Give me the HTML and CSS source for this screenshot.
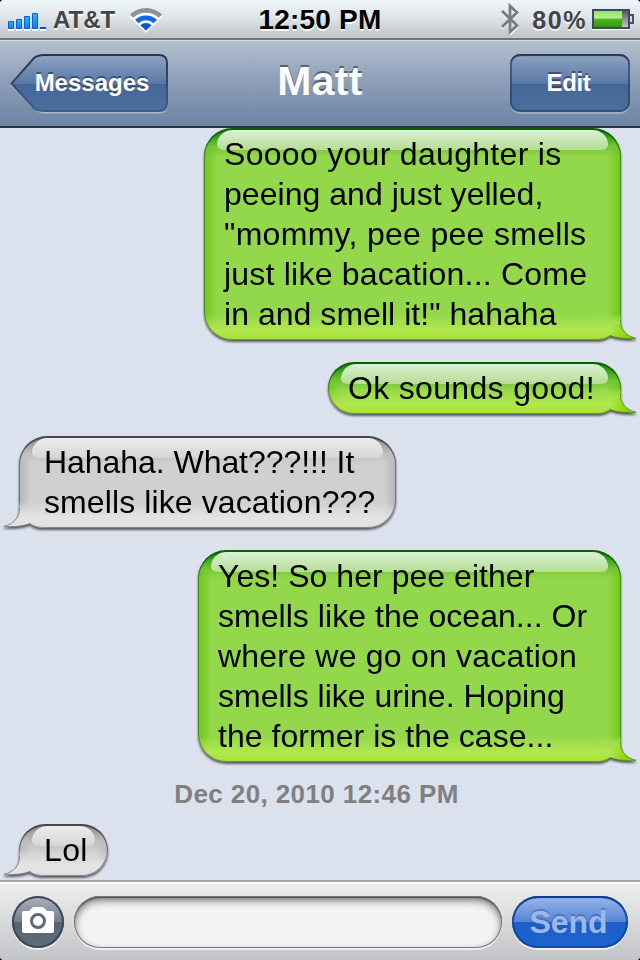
FILE: index.html
```html
<!DOCTYPE html>
<html lang="en">
<head>
    <meta charset="UTF-8">
    <meta name="viewport" content="width=device-width, initial-scale=1.0">
    <title>Messages</title>
    <link rel="stylesheet" href="styles.css">
</head>
<body>
    <div class="phone">

        <!-- Status Bar -->
        <div class="status-bar">
            <div class="status-left">
                <svg class="signal" width="39" height="20" viewBox="0 0 39 20">
                    <defs>
                        <linearGradient id="bar" x1="0" y1="0" x2="0" y2="1">
                            <stop offset="0" stop-color="#2fb4fb"/>
                            <stop offset="1" stop-color="#0b7ff0"/>
                        </linearGradient>
                    </defs>
                    <path d="M0 17h6v2H0zM8 17h6v2H8zM16 17h6v2h-6zM24 17h6v2h-6zM32 17h6v2h-6z" fill="#fff"/>
                    <g fill="url(#bar)" stroke="#0a5fd4" stroke-width="1">
                        <path d="M.5 9.500h5v7h-5z"/>
                        <path d="M8.500 7.500h5v9h-5z"/>
                        <path d="M16.500 4.500h5v12h-5z"/>
                        <path d="M24.500 1.500h5v15h-5z"/>
                    </g>
                    <path d="M32 15h6v2h-6z" fill="#0a4fc4"/>
                </svg>
                <span class="carrier">AT&amp;T</span>
                <svg class="wifi" width="34" height="27" viewBox="0 0 34 27">
                    <path d="M1 10A23 23 0 0 1 33 10L17 26z" fill="#fff"/>
                    <path d="M1 7.500A23 23 0 0 1 33 7.500L30 10.800A19 19 0 0 0 4 10.800z" fill="#929292"/>
                    <path d="M6 12.800A16 16 0 0 1 28 12.800L24.600 16.200A11.500 11.500 0 0 0 9.400 16.200z" fill="#1269e4"/>
                    <path d="M17 23.500l-5.600-5.300a8 8 0 0 1 11.200 0z" fill="#0c55d0"/>
                </svg>
            </div>
            <span class="clock">12:50 PM</span>
            <div class="status-right">
                <svg class="bluetooth" width="18" height="32" viewBox="0 0 18 32">
                    <path d="M1 8L16 22.500L9 30V2L16 9.500L1 24" fill="none" stroke="#fff" stroke-width="2.500" transform="translate(0 1.300)"/>
                    <path d="M1 8L16 22.500L9 29V3L16 9.500L1 24" fill="none" stroke="#7b7d7e" stroke-width="2.800"/>
                </svg>
                <span class="percent">80%</span>
                <svg class="battery" width="42" height="22" viewBox="0 0 42 22">
                    <defs>
                        <linearGradient id="charge" x1="0" y1="0" x2="0" y2="1">
                            <stop offset="0" stop-color="#8fe35e"/>
                            <stop offset=".4" stop-color="#b2f58c"/>
                            <stop offset=".55" stop-color="#43b51c"/>
                            <stop offset="1" stop-color="#37950f"/>
                        </linearGradient>
                        <linearGradient id="empty" x1="0" y1="0" x2="0" y2="1">
                            <stop offset="0" stop-color="#555"/>
                            <stop offset="1" stop-color="#c8c8c8"/>
                        </linearGradient>
                    </defs>
                    <path d="M0 19h38v2H0z" fill="#fff"/>
                    <path d="M37 6h4v8h-4" fill="#d5d8de" stroke="#4b506b" stroke-width="2"/>
                    <path d="M1 1h36v18H1z" fill="url(#empty)" stroke="#42465f" stroke-width="2"/>
                    <path d="M2 2h28v16H2z" fill="url(#charge)"/>
                </svg>
            </div>
        </div>

        <!-- Navigation Bar -->
        <div class="nav-bar">
            <button class="back-btn">
                <svg class="back-shape" width="160" height="60" viewBox="0 0 160 60">
                    <defs>
                        <linearGradient id="navBtn" x1="0" y1="0" x2="0" y2="1">
                            <stop offset="0" stop-color="#8da4c3"/>
                            <stop offset=".51" stop-color="#5978a6"/>
                            <stop offset=".51" stop-color="#456898"/>
                            <stop offset="1" stop-color="#4c6e9e"/>
                        </linearGradient>
                        <linearGradient id="navEdge" x1="0" y1="0" x2="0" y2="1">
                            <stop offset="0" stop-color="#2c3748"/>
                            <stop offset="1" stop-color="#3f5c8a"/>
                        </linearGradient>
                    </defs>
                    <path d="M34 1H149Q157 1 157 9V49Q157 57 149 57H34Q28 57 24 52L1.500 29.500L24 6Q28 1 34 1z" fill="none" stroke="#a9b7ca" stroke-width="2" transform="translate(0 1.500)"/>
                    <path d="M34 1H149Q157 1 157 9V49Q157 57 149 57H34Q28 57 24 54L1.500 29.500L24 4Q28 1 34 1z" fill="url(#navBtn)" stroke="url(#navEdge)" stroke-width="2"/>
                </svg>
                <span class="back-text">Messages</span>
            </button>
            <h1 class="title">Matt</h1>
            <button class="edit-btn">Edit</button>
        </div>

        <!-- Messages -->
        <div class="messages">
            <div class="bubble sent sent-1">
                <p>
                    <span class="l1">Soooo your daughter is</span>
                    <span class="l2">peeing and just yelled,</span>
                    <span class="l3">"mommy, pee pee smells</span>
                    <span class="l4">just like bacation... Come</span>
                    <span class="l5">in and smell it!" hahaha</span>
                </p>
                <svg class="tail" width="42" height="28" viewBox="0 0 42 28">
                    <defs>
                        <linearGradient id="greenTail" gradientUnits="userSpaceOnUse" x1="0" y1="0" x2="0" y2="28">
                            <stop offset=".05" stop-color="#95d94a" stop-opacity="0"/>
                            <stop offset=".4" stop-color="#a4e14c"/>
                            <stop offset=".64" stop-color="#b0e84e"/>
                            <stop offset="1" stop-color="#a8e236"/>
                        </linearGradient>
                        <linearGradient id="greenTip" gradientUnits="userSpaceOnUse" x1="16" y1="20" x2="34" y2="24">
                            <stop offset="0" stop-color="#7fd000" stop-opacity="0"/>
                            <stop offset="1" stop-color="#7fd000" stop-opacity=".9"/>
                        </linearGradient>
                    </defs>
                    <path d="M0 0H27V8C26 17 32 24 42 26.500C33 27 24 26.500 16 23.500C12 27 8 28 0 28z" fill="url(#greenTail)"/>
                    <path d="M16 12H27C27 17 32 24 42 26.500C33 27 24 26.500 16 23.500z" fill="url(#greenTip)"/>
                    <path d="M26.500 8C26 17 32 24 42 26.300C33 27 24 26.500 16 23.500C12 26.500 8 27.500 0 27.500" fill="none" stroke="#4d7a16" stroke-opacity=".7"/>
                </svg>
            </div>

            <div class="bubble sent sent-2">
                <p><span class="l6">Ok sounds good!</span></p>
                <svg class="tail" width="42" height="28" viewBox="0 0 42 28">
                    <path d="M0 0H27V8C26 17 32 24 42 26.500C33 27 24 26.500 16 23.500C12 27 8 28 0 28z" fill="url(#greenTail)"/>
                    <path d="M16 12H27C27 17 32 24 42 26.500C33 27 24 26.500 16 23.500z" fill="url(#greenTip)"/>
                    <path d="M26.500 8C26 17 32 24 42 26.300C33 27 24 26.500 16 23.500C12 26.500 8 27.500 0 27.500" fill="none" stroke="#4d7a16" stroke-opacity=".7"/>
                </svg>
            </div>

            <div class="bubble received received-1">
                <p>
                    <span class="l7">Hahaha. What???!!! It</span>
                    <span class="l8">smells like vacation???</span>
                </p>
                <svg class="tail" width="42" height="28" viewBox="0 0 42 28">
                    <defs>
                        <linearGradient id="grayTail" gradientUnits="userSpaceOnUse" x1="0" y1="0" x2="0" y2="28">
                            <stop offset=".05" stop-color="#d1d1d1" stop-opacity="0"/>
                            <stop offset=".4" stop-color="#dbdbdb"/>
                            <stop offset=".64" stop-color="#e4e4e4"/>
                            <stop offset="1" stop-color="#e0e0e0"/>
                        </linearGradient>
                    </defs>
                    <path d="M42 0H15V8C16 17 10 24 0 26.500C9 27 18 26.500 26 23.500C30 27 34 28 42 28z" fill="url(#grayTail)"/>
                    <path d="M15.500 8C16 17 10 24 0 26.300C9 27 18 26.500 26 23.500C30 26.500 34 27.500 42 27.500" fill="none" stroke="#777" stroke-opacity=".8"/>
                </svg>
            </div>

            <div class="bubble sent sent-3">
                <p>
                    <span class="l9">Yes! So her pee either</span>
                    <span class="l10">smells like the ocean... Or</span>
                    <span class="l11">where we go on vacation</span>
                    <span class="l12">smells like urine. Hoping</span>
                    <span class="l13">the former is the case...</span>
                </p>
                <svg class="tail" width="42" height="28" viewBox="0 0 42 28">
                    <path d="M0 0H27V8C26 17 32 24 42 26.500C33 27 24 26.500 16 23.500C12 27 8 28 0 28z" fill="url(#greenTail)"/>
                    <path d="M16 12H27C27 17 32 24 42 26.500C33 27 24 26.500 16 23.500z" fill="url(#greenTip)"/>
                    <path d="M26.500 8C26 17 32 24 42 26.300C33 27 24 26.500 16 23.500C12 26.500 8 27.500 0 27.500" fill="none" stroke="#4d7a16" stroke-opacity=".7"/>
                </svg>
            </div>

            <div class="date">Dec 20, 2010 12:46 PM</div>

            <div class="bubble received received-2">
                <p><span class="l14">Lol</span></p>
                <svg class="tail" width="42" height="28" viewBox="0 0 42 28">
                    <path d="M42 0H15V8C16 17 10 24 0 26.500C9 27 18 26.500 26 23.500C30 27 34 28 42 28z" fill="url(#grayTail)"/>
                    <path d="M15.500 8C16 17 10 24 0 26.300C9 27 18 26.500 26 23.500C30 26.500 34 27.500 42 27.500" fill="none" stroke="#777" stroke-opacity=".8"/>
                </svg>
            </div>
        </div>

        <!-- Compose Bar -->
        <div class="compose">
            <button class="camera-btn">
                <svg width="32" height="27" viewBox="0 0 32 27">
                    <path d="M2 4H6Q7.500 4 8.500 2.500Q10 0 12 0H20Q22 0 23.500 2.500Q24.500 4 26 4H30Q32 4 32 6V24Q32 26 30 26H2Q0 26 0 24V6Q0 4 2 4z" fill="#fff"/>
                    <circle cx="16" cy="14" r="6.500" fill="#fff" stroke="#5d6b7c" stroke-width="3"/>
                </svg>
            </button>
            <input type="text" class="message-input" aria-label="Message">
            <button class="send-btn">Send</button>
        </div>
    </div>
</body>
</html>
```
FILE: styles.css
```css
* {
    box-sizing: border-box;
}
body {
    margin: 0;
    background-color: #000;
    font-family: "Liberation Sans", Arial, Helvetica, sans-serif;
}
button {
    font-family: inherit;
    border: none;
    padding: 0;
}
svg {
    display: block;
}
.phone {
    width: 640px;
    height: 960px;
    display: flex;
    flex-direction: column;
    overflow: hidden;
    border-radius: 4px;
    background-color: #dbe1ed;
}

/* status bar */
.status-bar {
    height: 40px;
    display: grid;
    grid-template-columns: 1fr auto 1fr;
    align-items: start;
    padding: 0 6px 0 8px;
    background: linear-gradient(#eff6f9, #dfe5e8 45%, #c0c6c9 95%);
    border-bottom: 2px solid #6f7779;
    color: #444;
    font-weight: bold;
    text-shadow: 0 2px 0 rgba(255, 255, 255, 0.8);
}
.status-left, .status-right {
    display: flex;
    align-items: flex-start;
}
.status-right {
    justify-content: flex-end;
}
.signal {
    margin-top: 12px;
}
.carrier {
    font-size: 24px;
    line-height: 40px;
    margin-left: 6px;
}
.wifi {
    margin: 7px 0 0 14px;
}
.clock {
    font-size: 28px;
    line-height: 39px;
    letter-spacing: 0.2px;
    padding-right: 2px;
    color: #000;
}
.bluetooth {
    margin: 3px 13px 0 0;
}
.percent {
    font-size: 25px;
    line-height: 40px;
    letter-spacing: 1.6px;
}
.battery {
    margin: 9px 0 0 5px;
}

/* navigation bar */
.nav-bar {
    height: 88px;
    display: grid;
    grid-template-columns: 160px 1fr 120px;
    align-items: start;
    padding: 13px 10px 0;
    background: linear-gradient(#b4c0cf, #8b9cb6 50%, #6d84a4);
    border-top: 1px solid #d7dfe8;
    border-bottom: 2px solid #2d3138;
}
.back-btn {
    display: grid;
    background: none;
    color: #fff;
    font-size: 24px;
    font-weight: bold;
    text-shadow: 0 -2px 0 rgba(40, 58, 88, 0.7);
}
.back-shape, .back-text {
    grid-area: 1 / 1;
}
.back-text {
    line-height: 58px;
    padding-left: 4px;
}
.title {
    margin: 0;
    font-size: 41px;
    line-height: 54px;
    letter-spacing: 0.3px;
    color: #fff;
    text-align: center;
    padding-right: 40px;
    text-shadow: 0 -2px 0 rgba(50, 62, 82, 0.7);
}
.edit-btn {
    height: 58px;
    border-radius: 10px;
    padding-right: 3px;
    background: linear-gradient(#8da4c3, #5978a6 51%, #456898 51%, #4c6e9e);
    box-shadow: inset 0 0 0 2px rgba(40, 60, 95, 0.6), inset 0 2px 1px #2c3748, 0 2px 0 rgba(190, 204, 222, 0.5);
    color: #fff;
    font-size: 24px;
    font-weight: bold;
    letter-spacing: -0.3px;
    text-shadow: 0 -2px 0 rgba(40, 58, 88, 0.7);
}

/* message list */
.messages {
    flex: 1;
    display: flex;
    flex-direction: column;
    gap: 22px;
}
.bubble {
    position: relative;
    border-radius: 28px;
    padding: 6px 20px;
    filter: drop-shadow(0 2px 1px rgba(0, 0, 0, 0.6));
}
.bubble::before {
    content: "";
    position: absolute;
    top: 2px;
    left: 13px;
    right: 13px;
    height: 20px;
    border-radius: 17px 17px 8px 8px / 16px 16px 6px 6px;
}
.bubble p {
    position: relative;
    z-index: 1;
    margin: 0;
    font-size: 32px;
    line-height: 40px;
    white-space: nowrap;
    color: #000;
}
.bubble span {
    display: block;
}
.tail {
    position: absolute;
    bottom: 0;
}
.sent {
    align-self: flex-end;
    margin-right: 19px;
    border-bottom-right-radius: 28px 20px;
    background:
        linear-gradient(#067a06, #2f9f17 8px, #71c334 18px, rgba(146, 214, 74, 0) 28px),
        linear-gradient(to top, #a8e236, #b0e84e 10px, rgba(147, 215, 74, 0) 26px),
        linear-gradient(to right, #6fc71c, rgba(147, 215, 74, 0) 14px),
        linear-gradient(to left, #6fc71c, rgba(147, 215, 74, 0) 14px),
        #93d74a;
    box-shadow: inset 0 2px 1px #066006, inset 0 0 0 1px rgba(60, 110, 20, 0.6);
}
.sent::before {
    background: linear-gradient(#dcefd8, #b4df90);
}
.sent .tail {
    right: -15px;
}
.sent-1 {
    width: 417px;
}
.sent-2 {
    width: 293px;
}
.sent-3 {
    width: 423px;
}
.received {
    align-self: flex-start;
    margin-left: 19px;
    padding-left: 25px;
    border-bottom-left-radius: 28px 20px;
    background:
        linear-gradient(#7d7d7d, #a2a2a2 8px, #c0c0c0 18px, rgba(208, 208, 208, 0) 28px),
        linear-gradient(to top, #e0e0e0, #e4e4e4 10px, rgba(208, 208, 208, 0) 26px),
        linear-gradient(to right, #b4b4b4, rgba(208, 208, 208, 0) 12px),
        linear-gradient(to left, #b4b4b4, rgba(208, 208, 208, 0) 12px),
        #d0d0d0;
    box-shadow: inset 0 2px 1px #444, inset 0 0 0 1px rgba(80, 80, 80, 0.6);
}
.received::before {
    background: linear-gradient(#ececec, #d6d6d6);
}
.received .tail {
    left: -15px;
}
.received-1 {
    width: 377px;
}
.received-2 {
    width: 89px;
}
.date {
    height: 18px;
    font-size: 26px;
    line-height: 20px;
    font-weight: bold;
    letter-spacing: 0.4px;
    text-align: center;
    padding-right: 7px;
    color: #808080;
}

/* line tracking */
.l1, .l3 {
    letter-spacing: 0.3px;
}
.l2, .l5, .l9, .l10, .l13 {
    letter-spacing: 0.04px;
}
.l4, .l11 {
    letter-spacing: 0.22px;
}
.l6, .l14 {
    letter-spacing: 0.33px;
}
.l7 {
    letter-spacing: -0.05px;
}
.l8 {
    letter-spacing: 0.1px;
}

/* compose bar */
.compose {
    height: 80px;
    display: flex;
    align-items: flex-start;
    padding: 14px 12px 0;
    background: linear-gradient(#efefef, #c3c4c8);
    border-top: 2px solid #a2a4a8;
    box-shadow: inset 0 2px 0 #fff;
}
.camera-btn {
    flex-shrink: 0;
    width: 52px;
    height: 52px;
    display: flex;
    align-items: center;
    justify-content: center;
    border-radius: 50%;
    background: linear-gradient(#aab1bc, #75808f 50%, #566373 50%, #5f6d7d);
    box-shadow: inset 0 0 0 2px #3e4854, 0 2px 0 rgba(255, 255, 255, 0.7);
}
.camera-btn svg {
    margin-bottom: 3px;
}
.message-input {
    flex: 1;
    min-width: 0;
    height: 52px;
    margin: 0 10px;
    border: none;
    border-radius: 26px;
    padding: 0 22px;
    font-family: inherit;
    font-size: 32px;
    background-color: #f4f4f4;
    box-shadow: inset 0 0 0 1px #777, inset 0 2px 0 #4f4f4f, inset 0 4px 8px rgba(0, 0, 0, 0.6), 0 2px 0 rgba(255, 255, 255, 0.7);
}
.send-btn {
    flex-shrink: 0;
    width: 116px;
    height: 52px;
    border-radius: 26px;
    padding-right: 3px;
    background: linear-gradient(#9db8e8, #5384d6 50%, #1d60cb 50%, #1e62cd);
    box-shadow: inset 0 0 0 2px rgba(14, 58, 150, 0.7), inset 0 2px 1px #173a88, 0 2px 0 rgba(255, 255, 255, 0.7);
    color: #9cb8e8;
    font-size: 32px;
    font-weight: bold;
    text-shadow: 0 -2px 0 rgba(30, 70, 160, 0.4);
}
```
